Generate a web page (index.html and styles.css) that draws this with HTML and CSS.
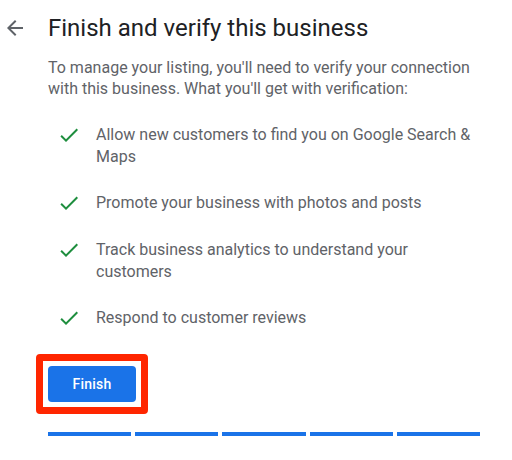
FILE: index.html
```html
<!DOCTYPE html>
<html>
<head>
<meta charset="utf-8">
<link rel="stylesheet" href="styles.css">
</head>
<body>
<div class="page">
  <div class="header">
    <svg class="back" viewBox="0 0 24 24" width="24" height="24"><path d="M20 11H7.83l5.59-5.59L12 4l-8 8 8 8 1.41-1.41L7.83 13H20v-2z"/></svg>
    <h1 class="title">Finish and verify this business</h1>
  </div>
  <div class="content">
    <p class="intro">To manage your listing, you'll need to verify your connection with this business. What you'll get with verification:</p>
    <ul class="benefits">
      <li class="benefit"><svg class="check" viewBox="0 0 24 24" width="24" height="24"><path d="M9 16.17L4.83 12l-1.42 1.41L9 19 21 7l-1.41-1.41z"/></svg><span>Allow new customers to find you on Google Search &amp; Maps</span></li>
      <li class="benefit"><svg class="check" viewBox="0 0 24 24" width="24" height="24"><path d="M9 16.17L4.83 12l-1.42 1.41L9 19 21 7l-1.41-1.41z"/></svg><span>Promote your business with photos and posts</span></li>
      <li class="benefit"><svg class="check" viewBox="0 0 24 24" width="24" height="24"><path d="M9 16.17L4.83 12l-1.42 1.41L9 19 21 7l-1.41-1.41z"/></svg><span>Track business analytics to understand your customers</span></li>
      <li class="benefit"><svg class="check" viewBox="0 0 24 24" width="24" height="24"><path d="M9 16.17L4.83 12l-1.42 1.41L9 19 21 7l-1.41-1.41z"/></svg><span>Respond to customer reviews</span></li>
    </ul>
    <div class="highlight"><button class="finish">Finish</button></div>
    <div class="progress">
      <span class="seg"></span><span class="seg"></span><span class="seg"></span><span class="seg"></span><span class="seg"></span>
    </div>
  </div>
</div>
</body>
</html>
```

FILE: styles.css
```css
html, body {
  margin: 0;
  padding: 0;
  background: #ffffff;
}
body {
  font-family: Roboto, "Liberation Sans", Arial, sans-serif;
  color: #5f6368;
}
.page {
  width: 512px;
  height: 460px;
}
.header {
  display: flex;
  align-items: center;
  padding: 12px 0 0 3px;
  gap: 21px;
}
.back {
  fill: #5f6368;
  flex: none;
}
.title {
  margin: 0;
  font-size: 24px;
  line-height: 32px;
  font-weight: 400;
  color: #202124;
}
.content {
  margin-left: 48px;
  width: 432px;
}
.intro {
  margin: 13px 0 0;
  font-size: 16px;
  line-height: 21px;
}
.benefits {
  list-style: none;
  margin: 25px 0 0;
  padding: 0;
  display: flex;
  flex-direction: column;
  gap: 24px;
}
.benefit {
  display: flex;
  align-items: flex-start;
  gap: 15px;
  font-size: 16px;
  line-height: 22px;
  margin-left: 9px;
}
.check {
  fill: #1e8e3e;
  flex: none;
  margin-top: -1px;
}
.highlight {
  display: inline-block;
  margin: 24px 0 0 -12px;
  border: 7px solid #ff2600;
  border-radius: 4px;
  padding: 5px;
}
.finish {
  display: block;
  width: 88px;
  height: 36px;
  border: 0;
  border-radius: 4px;
  background: #1a73e8;
  color: #ffffff;
  font-family: Roboto, "Liberation Sans", Arial, sans-serif;
  font-size: 14px;
  font-weight: 500;
  letter-spacing: 0.25px;
}
.progress {
  display: grid;
  grid-template-columns: repeat(5, 1fr);
  gap: 4px;
  margin-top: 18px;
}
.seg {
  height: 4px;
  background: #1a73e8;
}
```
